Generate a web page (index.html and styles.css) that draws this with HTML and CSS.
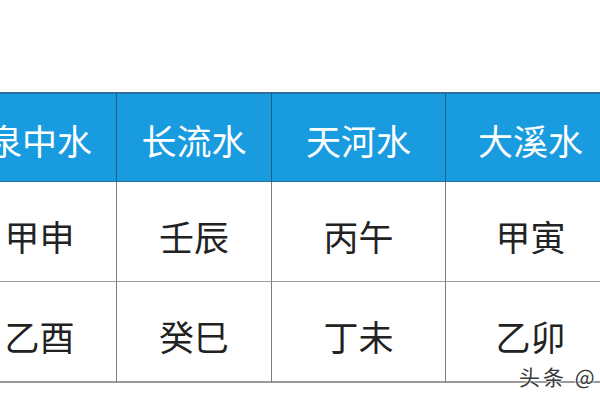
FILE: index.html
```html
<!DOCTYPE html>
<html lang="zh">
<head>
<meta charset="utf-8">
<link rel="stylesheet" href="styles.css">
</head>
<body>
<div class="page">
  <div class="table">
    <div class="cell head">泉中水</div>
    <div class="cell head">长流水</div>
    <div class="cell head">天河水</div>
    <div class="cell head">大溪水</div>
    <div class="cell">甲申</div>
    <div class="cell">壬辰</div>
    <div class="cell">丙午</div>
    <div class="cell">甲寅</div>
    <div class="cell last">乙酉</div>
    <div class="cell last">癸巳</div>
    <div class="cell last">丁未</div>
    <div class="cell last">乙卯</div>
  </div>
  <div class="mark">头条 @</div>
</div>
</body>
</html>
```

FILE: styles.css
```css
html, body {
  margin: 0;
  padding: 0;
  background: #ffffff;
}
.page {
  position: relative;
  width: 600px;
  height: 400px;
  overflow: hidden;
  padding-top: 92px;
  box-sizing: border-box;
  font-family: "Noto Sans CJK SC", "Noto Sans", sans-serif;
}
.table {
  margin-left: -37px;
  display: grid;
  grid-template-columns: 154px 155px 174px 170px;
  grid-template-rows: 90px 100px 101px;
  width: 653px;
}
.cell {
  display: flex;
  align-items: center;
  justify-content: center;
  font-size: 35px;
  color: #222;
  border-right: 1px solid #7d7d7d;
  border-bottom: 1px solid #9a9a9a;
  padding-top: 8px;
  box-sizing: border-box;
}
.cell.head {
  background: #199be0;
  color: #ffffff;
  border-top: 2px solid #2c6f9c;
  border-right: 1px solid #1d5d8c;
  border-bottom: 1px solid #2c6f9c;
  padding-top: 4px;
}
.cell.last {
  border-bottom: 2px solid #9a9a9a;
}
.mark {
  position: absolute;
  left: 519px;
  top: 361px;
  font-size: 21px;
  letter-spacing: 3px;
  color: #3a3a3a;
  text-shadow: 0 0 2px #fff, 0 0 2px #fff;
  white-space: nowrap;
}
```
